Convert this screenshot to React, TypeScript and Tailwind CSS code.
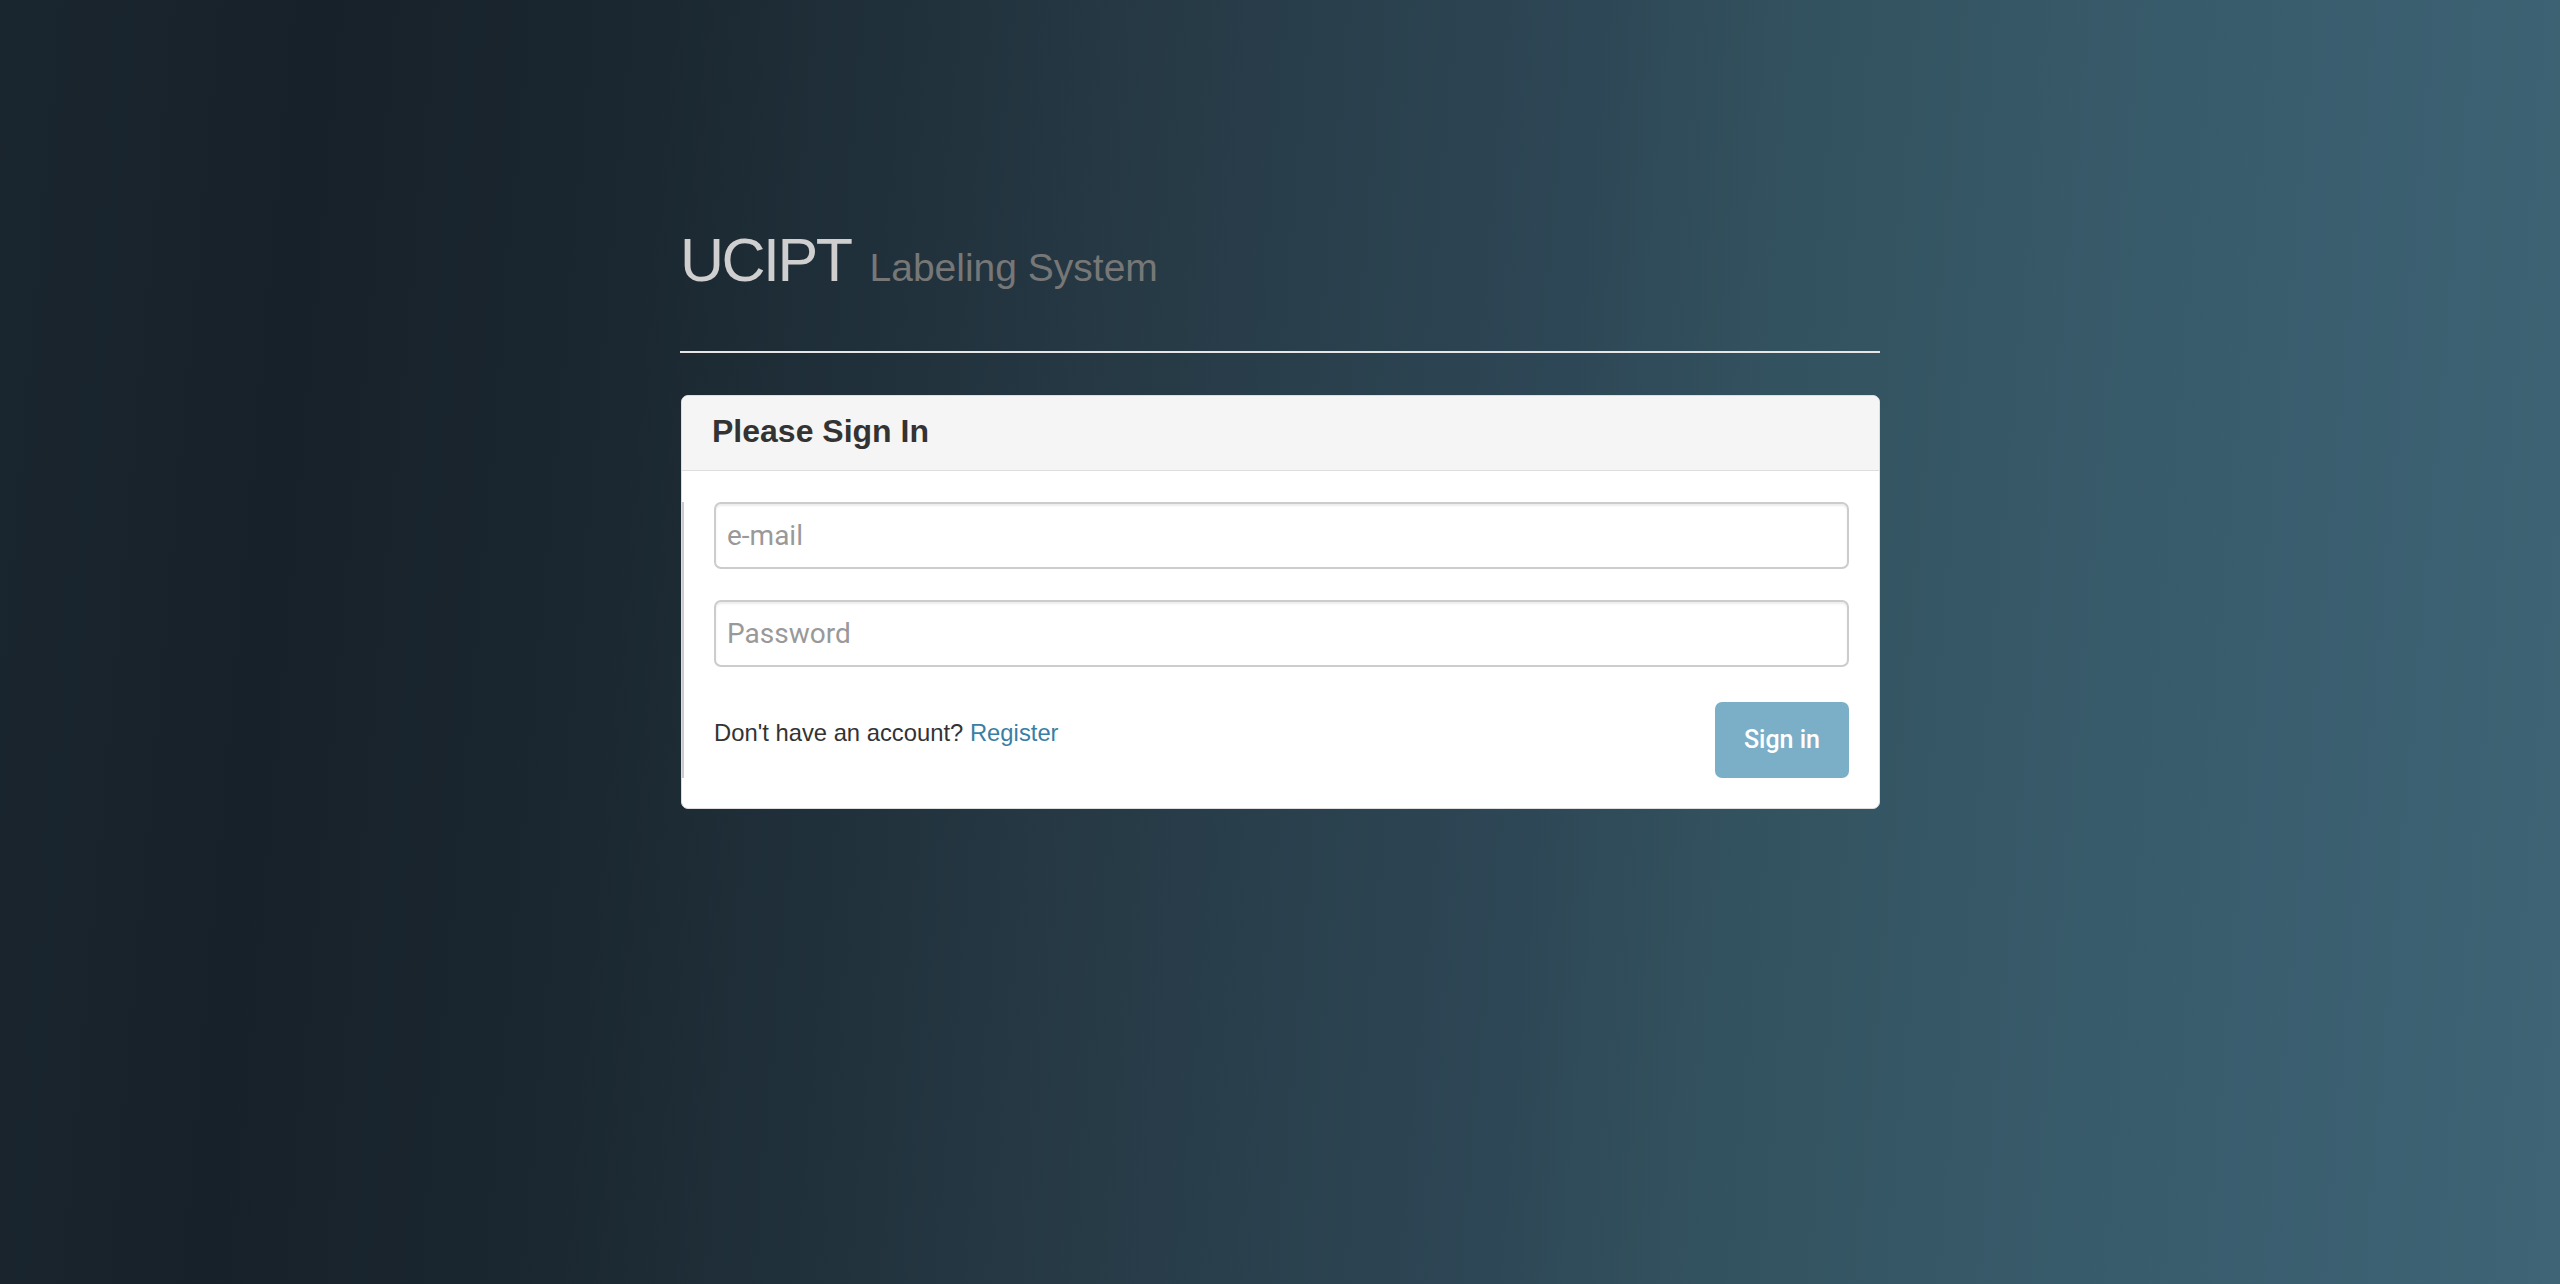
import { useState } from "react";

export default function App() {
  const [email, setEmail] = useState("");
  const [password, setPassword] = useState("");

  return (
    <div
      className="min-h-screen w-full bg-[linear-gradient(95deg,#1a262f_0%,#17212a_12%,#1b2831_25%,#273b47_45%,#2e4756_60%,#33525f_68%,#385b6b_82%,#3e6475_100%)]"
      style={{ fontFamily: "'Liberation Sans', Arial, sans-serif" }}
    >
      <div className="mx-auto w-[1200px] pt-[230px]">
        {/* Page header */}
        <div className="flex items-baseline border-b-2 border-[#e6e6e6] pb-[60px]">
          <span className="text-[61px] leading-none tracking-[-2.5px] text-[#cfcfcf]">UCIPT</span>
          <span className="ml-[19px] text-[39px] leading-none text-[#777777]">Labeling System</span>
        </div>

        {/* Sign in panel */}
        <div className="mt-[42px] ml-px overflow-hidden rounded-[7px] border border-[#dddddd] bg-white">
          <div className="h-[75px] border-b border-[#dddddd] bg-[#f5f5f5] pl-[30px] pt-[19px]">
            <h3 className="text-[32px] font-bold leading-none text-[#333333]">Please Sign In</h3>
          </div>

          <div className="pt-[31px] pb-[30px]">
            <form
              onSubmit={(e) => e.preventDefault()}
              className="flex flex-col border-l-2 border-[#cccccc] pl-[30px] pr-[30px]"
            >
              <input
                type="email"
                value={email}
                onChange={(e) => setEmail(e.target.value)}
                placeholder="e-mail"
                className="h-[67px] w-full rounded-[7px] border-2 border-[#cccccc] bg-white px-[11px] text-[28px] text-[#555555] shadow-[inset_0_2px_2px_rgba(0,0,0,0.075)] placeholder:text-[#999999] focus:outline-none"
                style={{ fontFamily: "Roboto, 'Liberation Sans', sans-serif" }}
              />
              <input
                type="password"
                value={password}
                onChange={(e) => setPassword(e.target.value)}
                placeholder="Password"
                className="mt-[31px] h-[67px] w-full rounded-[7px] border-2 border-[#cccccc] bg-white px-[11px] text-[28px] text-[#555555] shadow-[inset_0_2px_2px_rgba(0,0,0,0.075)] placeholder:text-[#999999] focus:outline-none"
                style={{ fontFamily: "Roboto, 'Liberation Sans', sans-serif" }}
              />

              <div className="mt-[35px] flex items-start justify-between">
                <p className="mt-[14px] text-[23.8px] leading-[34px] text-[#333333]">
                  Don't have an account?{" "}
                  <a href="#" className="text-[#3a7fa3]">
                    Register
                  </a>
                </p>
                <button
                  type="submit"
                  className="h-[76px] w-[134px] rounded-[7px] bg-[#7bafc8] text-[25px] font-medium text-white"
                  style={{ fontFamily: "Roboto, 'Liberation Sans', sans-serif" }}
                >
                  Sign in
                </button>
              </div>
            </form>
          </div>
        </div>
      </div>
    </div>
  );
}
